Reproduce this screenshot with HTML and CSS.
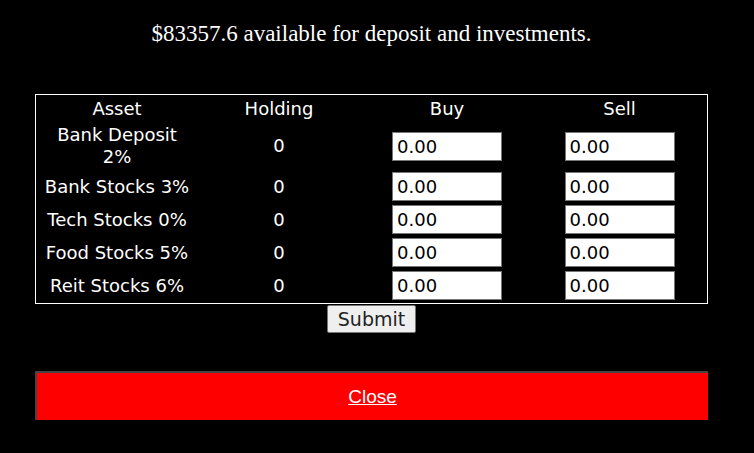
FILE: index.html
```html
<!DOCTYPE html>
<html lang="en">
<head>
    <meta charset="UTF-8">
    <meta name="viewport" content="width=device-width, initial-scale=1.0">
    <title>Invest</title>
    <link rel="stylesheet" href="styles.css">
</head>
<body>
    <div class="container">
        <p class="available">$83357.6 available for deposit and investments.</p>

        <form class="invest-form">
            <table class="invest-table">
                <tr>
                    <th class="col-asset">Asset</th>
                    <th class="col-holding">Holding</th>
                    <th class="col-buy">Buy</th>
                    <th class="col-sell">Sell</th>
                </tr>
                <tr>
                    <td>Bank Deposit<br>2%</td>
                    <td>0</td>
                    <td><input type="text" value="0.00"></td>
                    <td><input type="text" value="0.00"></td>
                </tr>
                <tr>
                    <td>Bank Stocks 3%</td>
                    <td>0</td>
                    <td><input type="text" value="0.00"></td>
                    <td><input type="text" value="0.00"></td>
                </tr>
                <tr>
                    <td>Tech Stocks 0%</td>
                    <td>0</td>
                    <td><input type="text" value="0.00"></td>
                    <td><input type="text" value="0.00"></td>
                </tr>
                <tr>
                    <td>Food Stocks 5%</td>
                    <td>0</td>
                    <td><input type="text" value="0.00"></td>
                    <td><input type="text" value="0.00"></td>
                </tr>
                <tr>
                    <td>Reit Stocks 6%</td>
                    <td>0</td>
                    <td><input type="text" value="0.00"></td>
                    <td><input type="text" value="0.00"></td>
                </tr>
            </table>
            <div class="submit-row">
                <button type="button" class="submit-button">Submit</button>
            </div>
        </form>

        <button type="button" class="close-button"><u>Close</u></button>
    </div>
</body>
</html>
```

FILE: styles.css
```css
* {
    box-sizing: border-box;
}

body {
    margin: 0;
    background-color: #000;
    color: #fff;
    font-family: 'DejaVu Sans', sans-serif;
}

.container {
    width: 673px;
    margin-left: 35px;
    padding-top: 20px;
}

.available {
    margin: 0 0 46px;
    font-family: 'Liberation Serif', serif;
    font-size: 23px;
    line-height: 28px;
    text-align: center;
}

.invest-table {
    width: 100%;
    table-layout: fixed;
    border: 1px solid #fff;
    border-spacing: 2px;
    font-size: 18px;
    line-height: 22px;
}

.invest-table th,
.invest-table td {
    padding: 1px;
    font-weight: normal;
    text-align: center;
}

.col-asset { width: 158px; }
.col-holding { width: 162px; }
.col-buy { width: 170px; }
.col-sell { width: 171px; }

.invest-table input {
    width: 110px;
    height: 29px;
    padding: 0 4px;
    border: 1px solid #767676;
    font-family: 'DejaVu Sans', sans-serif;
    font-size: 18px;
    color: #000;
    background: #fff;
    vertical-align: middle;
}

.submit-row {
    display: flex;
    justify-content: center;
    margin-top: 1px;
}

.submit-button {
    height: 28px;
    padding: 0 10px;
    font-family: 'DejaVu Sans', sans-serif;
    font-size: 19px;
    color: #222;
    background: #efefef;
    border: 1px solid #767676;
    border-radius: 2px;
}

.close-button {
    display: block;
    width: 100%;
    height: 49px;
    margin-top: 38px;
    background: #ff0000;
    color: #fff;
    font-family: 'Liberation Sans', sans-serif;
    font-size: 19px;
    border-style: solid;
    border-width: 2px 0 0 2px;
    border-color: #444;
}
```
